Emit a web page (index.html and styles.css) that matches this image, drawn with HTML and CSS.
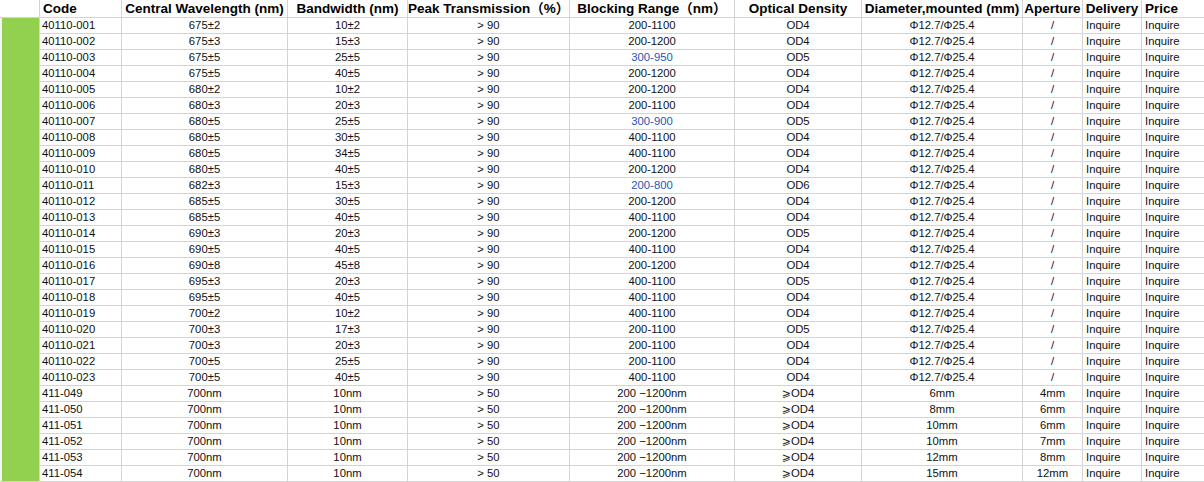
FILE: index.html
```html
<!DOCTYPE html>
<html>
<head>
<meta charset="utf-8">
<link rel="stylesheet" href="styles.css">
</head>
<body>
<div class="sheet">
  <div class="corner"></div>
  <div class="hd l">Code</div>
  <div class="hd">Central Wavelength (nm)</div>
  <div class="hd">Bandwidth (nm)</div>
  <div class="hd">Peak Transmission（%）</div>
  <div class="hd">Blocking Range（nm）</div>
  <div class="hd">Optical Density</div>
  <div class="hd">Diameter,mounted (mm)</div>
  <div class="hd">Aperture</div>
  <div class="hd">Delivery</div>
  <div class="hd l">Price</div>
  <div class="mark"></div>

  <div class="c code">40110-001</div><div class="c">675±2</div><div class="c">10±2</div><div class="c">&gt; 90</div><div class="c">200-1100</div><div class="c">OD4</div><div class="c">Φ12.7/Φ25.4</div><div class="c">/</div><div class="c l">Inquire</div><div class="c l">Inquire</div>
  <div class="c code">40110-002</div><div class="c">675±3</div><div class="c">15±3</div><div class="c">&gt; 90</div><div class="c">200-1200</div><div class="c">OD4</div><div class="c">Φ12.7/Φ25.4</div><div class="c">/</div><div class="c l">Inquire</div><div class="c l">Inquire</div>
  <div class="c code">40110-003</div><div class="c">675±5</div><div class="c">25±5</div><div class="c">&gt; 90</div><div class="c blue">300-950</div><div class="c">OD5</div><div class="c">Φ12.7/Φ25.4</div><div class="c">/</div><div class="c l">Inquire</div><div class="c l">Inquire</div>
  <div class="c code">40110-004</div><div class="c">675±5</div><div class="c">40±5</div><div class="c">&gt; 90</div><div class="c">200-1200</div><div class="c">OD4</div><div class="c">Φ12.7/Φ25.4</div><div class="c">/</div><div class="c l">Inquire</div><div class="c l">Inquire</div>
  <div class="c code">40110-005</div><div class="c">680±2</div><div class="c">10±2</div><div class="c">&gt; 90</div><div class="c">200-1200</div><div class="c">OD4</div><div class="c">Φ12.7/Φ25.4</div><div class="c">/</div><div class="c l">Inquire</div><div class="c l">Inquire</div>
  <div class="c code">40110-006</div><div class="c">680±3</div><div class="c">20±3</div><div class="c">&gt; 90</div><div class="c">200-1100</div><div class="c">OD4</div><div class="c">Φ12.7/Φ25.4</div><div class="c">/</div><div class="c l">Inquire</div><div class="c l">Inquire</div>
  <div class="c code">40110-007</div><div class="c">680±5</div><div class="c">25±5</div><div class="c">&gt; 90</div><div class="c blue">300-900</div><div class="c">OD5</div><div class="c">Φ12.7/Φ25.4</div><div class="c">/</div><div class="c l">Inquire</div><div class="c l">Inquire</div>
  <div class="c code">40110-008</div><div class="c">680±5</div><div class="c">30±5</div><div class="c">&gt; 90</div><div class="c">400-1100</div><div class="c">OD4</div><div class="c">Φ12.7/Φ25.4</div><div class="c">/</div><div class="c l">Inquire</div><div class="c l">Inquire</div>
  <div class="c code">40110-009</div><div class="c">680±5</div><div class="c">34±5</div><div class="c">&gt; 90</div><div class="c">400-1100</div><div class="c">OD4</div><div class="c">Φ12.7/Φ25.4</div><div class="c">/</div><div class="c l">Inquire</div><div class="c l">Inquire</div>
  <div class="c code">40110-010</div><div class="c">680±5</div><div class="c">40±5</div><div class="c">&gt; 90</div><div class="c">200-1200</div><div class="c">OD4</div><div class="c">Φ12.7/Φ25.4</div><div class="c">/</div><div class="c l">Inquire</div><div class="c l">Inquire</div>
  <div class="c code">40110-011</div><div class="c">682±3</div><div class="c">15±3</div><div class="c">&gt; 90</div><div class="c blue">200-800</div><div class="c">OD6</div><div class="c">Φ12.7/Φ25.4</div><div class="c">/</div><div class="c l">Inquire</div><div class="c l">Inquire</div>
  <div class="c code">40110-012</div><div class="c">685±5</div><div class="c">30±5</div><div class="c">&gt; 90</div><div class="c">200-1200</div><div class="c">OD4</div><div class="c">Φ12.7/Φ25.4</div><div class="c">/</div><div class="c l">Inquire</div><div class="c l">Inquire</div>
  <div class="c code">40110-013</div><div class="c">685±5</div><div class="c">40±5</div><div class="c">&gt; 90</div><div class="c">400-1100</div><div class="c">OD4</div><div class="c">Φ12.7/Φ25.4</div><div class="c">/</div><div class="c l">Inquire</div><div class="c l">Inquire</div>
  <div class="c code">40110-014</div><div class="c">690±3</div><div class="c">20±3</div><div class="c">&gt; 90</div><div class="c">200-1200</div><div class="c">OD5</div><div class="c">Φ12.7/Φ25.4</div><div class="c">/</div><div class="c l">Inquire</div><div class="c l">Inquire</div>
  <div class="c code">40110-015</div><div class="c">690±5</div><div class="c">40±5</div><div class="c">&gt; 90</div><div class="c">400-1100</div><div class="c">OD4</div><div class="c">Φ12.7/Φ25.4</div><div class="c">/</div><div class="c l">Inquire</div><div class="c l">Inquire</div>
  <div class="c code">40110-016</div><div class="c">690±8</div><div class="c">45±8</div><div class="c">&gt; 90</div><div class="c">200-1200</div><div class="c">OD4</div><div class="c">Φ12.7/Φ25.4</div><div class="c">/</div><div class="c l">Inquire</div><div class="c l">Inquire</div>
  <div class="c code">40110-017</div><div class="c">695±3</div><div class="c">20±3</div><div class="c">&gt; 90</div><div class="c">400-1100</div><div class="c">OD5</div><div class="c">Φ12.7/Φ25.4</div><div class="c">/</div><div class="c l">Inquire</div><div class="c l">Inquire</div>
  <div class="c code">40110-018</div><div class="c">695±5</div><div class="c">40±5</div><div class="c">&gt; 90</div><div class="c">400-1100</div><div class="c">OD4</div><div class="c">Φ12.7/Φ25.4</div><div class="c">/</div><div class="c l">Inquire</div><div class="c l">Inquire</div>
  <div class="c code">40110-019</div><div class="c">700±2</div><div class="c">10±2</div><div class="c">&gt; 90</div><div class="c">400-1100</div><div class="c">OD4</div><div class="c">Φ12.7/Φ25.4</div><div class="c">/</div><div class="c l">Inquire</div><div class="c l">Inquire</div>
  <div class="c code">40110-020</div><div class="c">700±3</div><div class="c">17±3</div><div class="c">&gt; 90</div><div class="c">200-1100</div><div class="c">OD5</div><div class="c">Φ12.7/Φ25.4</div><div class="c">/</div><div class="c l">Inquire</div><div class="c l">Inquire</div>
  <div class="c code">40110-021</div><div class="c">700±3</div><div class="c">20±3</div><div class="c">&gt; 90</div><div class="c">200-1100</div><div class="c">OD4</div><div class="c">Φ12.7/Φ25.4</div><div class="c">/</div><div class="c l">Inquire</div><div class="c l">Inquire</div>
  <div class="c code">40110-022</div><div class="c">700±5</div><div class="c">25±5</div><div class="c">&gt; 90</div><div class="c">200-1100</div><div class="c">OD4</div><div class="c">Φ12.7/Φ25.4</div><div class="c">/</div><div class="c l">Inquire</div><div class="c l">Inquire</div>
  <div class="c code">40110-023</div><div class="c">700±5</div><div class="c">40±5</div><div class="c">&gt; 90</div><div class="c">400-1100</div><div class="c">OD4</div><div class="c">Φ12.7/Φ25.4</div><div class="c">/</div><div class="c l">Inquire</div><div class="c l">Inquire</div>
  <div class="c code">411-049</div><div class="c">700nm</div><div class="c">10nm</div><div class="c">&gt; 50</div><div class="c">200 −1200nm</div><div class="c"><span class="ge">⩾</span>OD4</div><div class="c">6mm</div><div class="c">4mm</div><div class="c l">Inquire</div><div class="c l">Inquire</div>
  <div class="c code">411-050</div><div class="c">700nm</div><div class="c">10nm</div><div class="c">&gt; 50</div><div class="c">200 −1200nm</div><div class="c"><span class="ge">⩾</span>OD4</div><div class="c">8mm</div><div class="c">6mm</div><div class="c l">Inquire</div><div class="c l">Inquire</div>
  <div class="c code">411-051</div><div class="c">700nm</div><div class="c">10nm</div><div class="c">&gt; 50</div><div class="c">200 −1200nm</div><div class="c"><span class="ge">⩾</span>OD4</div><div class="c">10mm</div><div class="c">6mm</div><div class="c l">Inquire</div><div class="c l">Inquire</div>
  <div class="c code">411-052</div><div class="c">700nm</div><div class="c">10nm</div><div class="c">&gt; 50</div><div class="c">200 −1200nm</div><div class="c"><span class="ge">⩾</span>OD4</div><div class="c">10mm</div><div class="c">7mm</div><div class="c l">Inquire</div><div class="c l">Inquire</div>
  <div class="c code">411-053</div><div class="c">700nm</div><div class="c">10nm</div><div class="c">&gt; 50</div><div class="c">200 −1200nm</div><div class="c"><span class="ge">⩾</span>OD4</div><div class="c">12mm</div><div class="c">8mm</div><div class="c l">Inquire</div><div class="c l">Inquire</div>
  <div class="c code">411-054</div><div class="c">700nm</div><div class="c">10nm</div><div class="c">&gt; 50</div><div class="c">200 −1200nm</div><div class="c"><span class="ge">⩾</span>OD4</div><div class="c">15mm</div><div class="c">12mm</div><div class="c l">Inquire</div><div class="c l">Inquire</div>
</div>
</body>
</html>
```

FILE: styles.css
```css
html, body {
  margin: 0;
  padding: 0;
  background: #ffffff;
}

.sheet {
  display: grid;
  grid-template-columns: 39px 81px 165px 119px 161px 164px 126px 160px 59px 58px 62px;
  grid-template-rows: 17px repeat(29, 15px);
  gap: 1px;
  background: #d4d4d4;
  width: 1204px;
  padding-bottom: 1px;
  color: #111111;
}

.corner {
  background: #ffffff;
}

.mark {
  grid-column: 1;
  grid-row: 2 / span 29;
  background: #92d050;
  border-left: 2px solid #f4f4f4;
}

.hd {
  background: #ffffff;
  font-family: "Liberation Sans", "Noto Sans CJK SC", sans-serif;
  font-weight: bold;
  font-size: 13.5px;
  line-height: 17px;
  text-align: center;
  white-space: nowrap;
  overflow: hidden;
  color: #000000;
}

.hd.l {
  text-align: left;
  padding-left: 3px;
}

.c {
  background: #ffffff;
  font-family: "Liberation Sans", "DejaVu Sans", sans-serif;
  font-size: 11.3px;
  line-height: 15px;
  text-align: center;
  white-space: nowrap;
  overflow: hidden;
}

.c.code {
  grid-column: 2;
  text-align: left;
  padding-left: 2px;
}

.c.l {
  text-align: left;
  padding-left: 3px;
}

.blue {
  color: #2456b8;
}

.ge {
  font-family: "DejaVu Sans", sans-serif;
  font-size: 11px;
}
```
